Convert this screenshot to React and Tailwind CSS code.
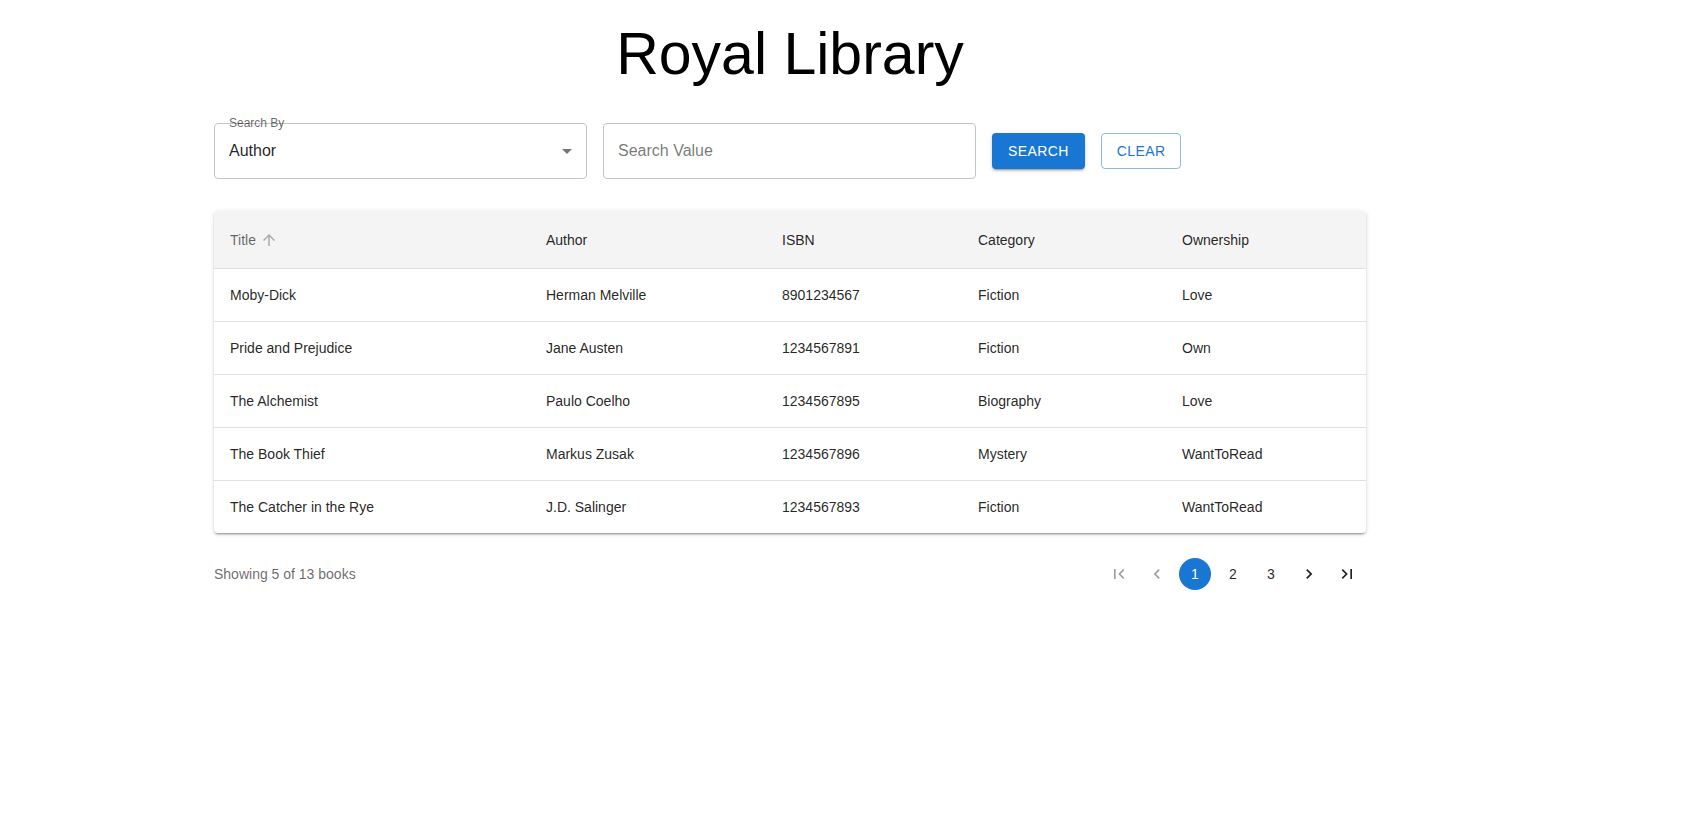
import React from "react";

const books = [
  { title: "Moby-Dick", author: "Herman Melville", isbn: "8901234567", category: "Fiction", ownership: "Love" },
  { title: "Pride and Prejudice", author: "Jane Austen", isbn: "1234567891", category: "Fiction", ownership: "Own" },
  { title: "The Alchemist", author: "Paulo Coelho", isbn: "1234567895", category: "Biography", ownership: "Love" },
  { title: "The Book Thief", author: "Markus Zusak", isbn: "1234567896", category: "Mystery", ownership: "WantToRead" },
  { title: "The Catcher in the Rye", author: "J.D. Salinger", isbn: "1234567893", category: "Fiction", ownership: "WantToRead" },
];

const Icon = ({ d, className }) => (
  <svg viewBox="0 0 24 24" className={className} fill="currentColor">
    <path d={d} />
  </svg>
);

const PageBtn = ({ children, active, disabled }) => (
  <button
    className={
      active
        ? "mx-[3px] flex h-8 w-8 items-center justify-center rounded-full bg-[#1976d2] text-sm text-white"
        : disabled
        ? "mx-[3px] flex h-8 w-8 items-center justify-center rounded-full text-sm text-black/[0.38]"
        : "mx-[3px] flex h-8 w-8 items-center justify-center rounded-full text-sm text-black/[0.87]"
    }
  >
    {children}
  </button>
);

export default function App() {
  return (
    <div className="min-h-screen bg-white font-['Liberation_Sans',Arial,sans-serif] text-black/[0.87]">
      <div className="ml-[214px] w-[1152px]">
        <h1 className="pt-[25px] text-center text-[59px] leading-[59px] text-black">Royal Library</h1>

        {/* Search form */}
        <div className="mt-[39px] flex items-center gap-4">
          <div className="relative flex h-14 w-[373px] items-center rounded border border-[#c4c4c4] pl-[14px] pr-[7px]">
            <span className="absolute -top-[8px] left-[14px] text-xs leading-[14px] text-black/60">Search By</span>
            <span className="flex-1 text-base">Author</span>
            <Icon d="M7 10l5 5 5-5z" className="h-6 w-6 text-black/[0.54]" />
          </div>
          <div className="flex h-14 w-[373px] items-center rounded border border-[#c4c4c4] px-[14px]">
            <span className="text-base text-black/[0.55]">Search Value</span>
          </div>
          <button className="h-[36.5px] rounded bg-[#1976d2] px-4 text-sm uppercase tracking-[0.4px] text-white shadow-[0px_3px_1px_-2px_rgba(0,0,0,0.2),0px_2px_2px_0px_rgba(0,0,0,0.14),0px_1px_5px_0px_rgba(0,0,0,0.12)]">
            Search
          </button>
          <button className="h-[36.5px] rounded border border-[#1976d2]/50 px-[15px] text-sm uppercase tracking-[0.4px] text-[#1976d2]">
            Clear
          </button>
        </div>

        {/* Table */}
        <div className="mt-8 overflow-hidden rounded bg-white shadow-[0px_3px_1px_-2px_rgba(0,0,0,0.2),0px_2px_2px_0px_rgba(0,0,0,0.14),0px_1px_5px_0px_rgba(0,0,0,0.12)]">
          <table className="w-full table-fixed border-collapse text-left text-sm">
            <colgroup>
              <col className="w-[316px]" />
              <col className="w-[236px]" />
              <col className="w-[196px]" />
              <col className="w-[204px]" />
              <col className="w-[200px]" />
            </colgroup>
            <thead className="bg-[#f4f4f4]">
              <tr className="h-[57px] border-b border-[#e0e0e0]">
                <th className="px-4 pt-[2px] font-normal text-black/60">
                  <span className="flex items-center">
                    Title
                    <Icon d="M4 12l1.41 1.41L11 7.83V20h2V7.83l5.58 5.59L20 12l-8-8-8 8z" className="ml-1 h-[18px] w-[18px] text-black/30" />
                  </span>
                </th>
                <th className="px-4 pt-[2px] font-normal">Author</th>
                <th className="px-4 pt-[2px] font-normal">ISBN</th>
                <th className="px-4 pt-[2px] font-normal">Category</th>
                <th className="px-4 pt-[2px] font-normal">Ownership</th>
              </tr>
            </thead>
            <tbody>
              {books.map((b) => (
                <tr key={b.isbn} className="h-[53px] border-b border-[#e0e0e0] last:border-b-0">
                  <td className="px-4">{b.title}</td>
                  <td className="px-4">{b.author}</td>
                  <td className="px-4">{b.isbn}</td>
                  <td className="px-4">{b.category}</td>
                  <td className="px-4">{b.ownership}</td>
                </tr>
              ))}
            </tbody>
          </table>
        </div>

        {/* Footer */}
        <div className="mt-[25px] flex h-8 items-center justify-between">
          <span className="text-sm text-black/60">Showing 5 of 13 books</span>
          <div className="flex items-center">
            <PageBtn disabled>
              <Icon d="M18.41 16.59L13.82 12l4.59-4.59L17 6l-6 6 6 6zM6 6h2v12H6z" className="h-5 w-5" />
            </PageBtn>
            <PageBtn disabled>
              <Icon d="M15.41 7.41L14 6l-6 6 6 6 1.41-1.41L10.83 12z" className="h-5 w-5" />
            </PageBtn>
            <PageBtn active>1</PageBtn>
            <PageBtn>2</PageBtn>
            <PageBtn>3</PageBtn>
            <PageBtn>
              <Icon d="M10 6L8.59 7.41 13.17 12l-4.58 4.59L10 18l6-6z" className="h-5 w-5" />
            </PageBtn>
            <PageBtn>
              <Icon d="M5.59 7.41L10.18 12l-4.59 4.59L7 18l6-6-6-6zM16 6h2v12h-2z" className="h-5 w-5" />
            </PageBtn>
          </div>
        </div>
      </div>
    </div>
  );
}
